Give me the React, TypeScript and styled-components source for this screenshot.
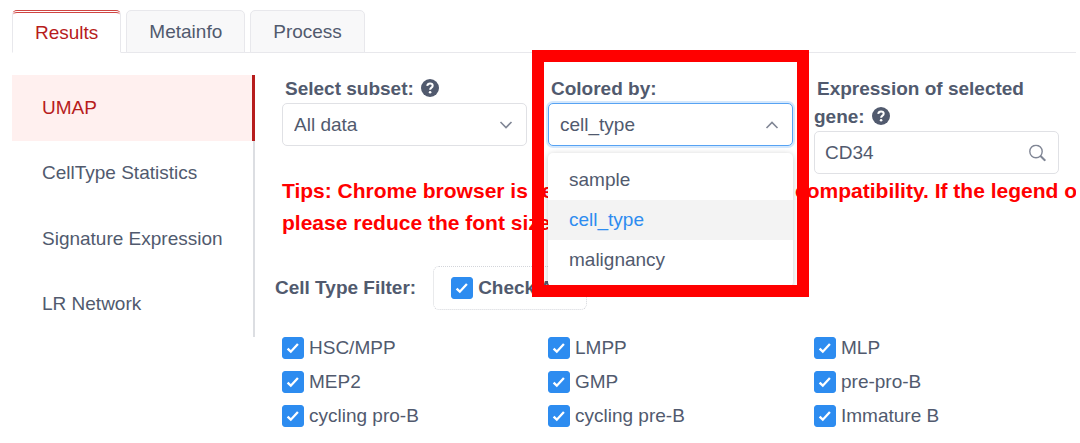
import React, { useState } from "react";
import styled, { createGlobalStyle } from "styled-components";

const text = "#515a6e";
const line = "#e8e8ec";
const red = "#b71c1c";
const blue = "#2d8cf0";

const GlobalStyle = createGlobalStyle`
  *, *::before, *::after { box-sizing: border-box; }
  body {
    margin: 0;
    background: #fff;
    color: ${text};
    font-family: "Liberation Sans", Arial, sans-serif;
    font-size: 19px;
    line-height: 28px;
  }
  button, input, select { font: inherit; color: inherit; }
`;

const Page = styled.div`
  padding: 10px 4px 0 12px;
`;

const TabBar = styled.div`
  display: flex;
  gap: 5px;
  border-bottom: 1px solid ${line};
`;

const Tab = styled.button<{ $active: boolean }>`
  height: 43px;
  margin-bottom: -1px;
  padding: 0 22px;
  border: 1px solid ${line};
  border-top: ${(p) => (p.$active ? "3px double #cf4542" : `1px solid ${line}`)};
  border-bottom-color: ${(p) => (p.$active ? "#fff" : line)};
  border-radius: 5px 5px 0 0;
  background: ${(p) => (p.$active ? "#fff" : "#f8f8f9")};
  color: ${(p) => (p.$active ? red : text)};
  cursor: pointer;
`;

const Body = styled.div`
  display: flex;
  align-items: flex-start;
  padding-top: 22px;
`;

const SideNav = styled.nav`
  display: grid;
  grid-auto-rows: 1fr;
  flex: 0 0 243px;
  min-height: 262px;
  box-shadow: inset -2px 0 #dcdee2;
`;

const SideLink = styled.a<{ $active: boolean }>`
  display: flex;
  align-items: center;
  padding-left: 30px;
  border-right: 3px solid ${(p) => (p.$active ? red : "transparent")};
  background: ${(p) => (p.$active ? "#fff0ef" : "transparent")};
  color: ${(p) => (p.$active ? red : text)};
  text-decoration: none;
`;

// Long tips are cut at the right edge; the top stays open for the highlight frame.
const Content = styled.main`
  flex: 1;
  min-width: 0;
  padding-left: 27px;
  overflow-x: clip;
  overflow-y: visible;
`;

const Columns = styled.div`
  display: grid;
  grid-template-columns: repeat(3, 1fr);
  column-gap: 21px;
  padding-right: 17px;
`;

const Field = styled.div`
  position: relative;
`;

const FieldLabel = styled.label`
  display: block;
  font-weight: bold;
  text-indent: 3px;

  svg {
    margin-left: 2px;
    vertical-align: -2px;
  }
`;

const Control = styled.div`
  position: relative;

  > svg {
    position: absolute;
    right: 13px;
    top: 50%;
    transform: translateY(-50%);
    pointer-events: none;
  }
`;

const Select = styled.select<{ $open?: boolean }>`
  display: block;
  appearance: none;
  width: 100%;
  height: 43px;
  padding: 0 11px;
  border: 1px solid ${(p) => (p.$open ? "#57a3f3" : "#e0e1e5")};
  border-radius: 5px;
  background: #fff;
  box-shadow: ${(p) => (p.$open ? "0 0 0 2px rgba(45, 140, 240, 0.2)" : "none")};
  outline: none;
`;

const TextInput = styled.input`
  display: block;
  width: 100%;
  height: 43px;
  padding: 0 40px 0 10px;
  border: 1px solid #e0e1e5;
  border-radius: 5px;
  background: #fff;
  outline: none;
`;

const Menu = styled.ul`
  position: absolute;
  z-index: 1;
  top: 50px;
  left: 0;
  right: 0;
  margin: 0;
  padding: 7px 0;
  border-radius: 5px;
  background: #fff;
  box-shadow: 0 1px 6px rgba(0, 0, 0, 0.2);
  list-style: none;
`;

const MenuItem = styled.li<{ $selected: boolean }>`
  padding: 6px 21px;
  background: ${(p) => (p.$selected ? "#f3f3f3" : "#fff")};
  color: ${(p) => (p.$selected ? blue : text)};
  cursor: pointer;
`;

const Highlight = styled.div`
  position: absolute;
  z-index: 2;
  top: -25px;
  left: -16px;
  right: -16px;
  height: 247px;
  border: 12px solid #f00;
  pointer-events: none;
`;

const Tips = styled.p`
  margin: 1px 0 0;
  color: #f00;
  font-size: 21px;
  font-weight: bold;
  line-height: 32px;
  white-space: nowrap;
`;

const FilterRow = styled.div`
  display: flex;
  align-items: center;
  gap: 17px;
  margin: 27px 0 24px -7px;
  font-weight: bold;
`;

const CheckAllBox = styled.div`
  padding: 7px 22px 7px 17px;
  border: 1px dotted #d3d5da;
  border-radius: 6px;
`;

const CheckLabel = styled.label`
  display: flex;
  align-items: center;
  gap: 5px;
`;

const CheckGrid = styled(Columns)`
  row-gap: 6px;
`;

const Tick = styled.span`
  display: grid;
  flex: none;
  width: 22px;
  height: 22px;

  > * { grid-area: 1 / 1; }
  svg { pointer-events: none; }
`;

const TickInput = styled.input`
  appearance: none;
  width: 22px;
  height: 22px;
  margin: 0;
  border: 1px solid #dcdee2;
  border-radius: 3px;
  background: #fff;

  &:checked {
    border-color: ${blue};
    background: ${blue};
  }
`;

function HelpIcon() {
  return (
    <svg width="18" height="18" viewBox="0 0 18 18" aria-hidden="true">
      <circle cx="9" cy="9" r="9" fill={text} />
      <path
        d="M6.200 6.900C6.500 5.300 7.500 4.500 9 4.500c1.700 0 2.700 1 2.700 2.200 0 1.900-2.600 1.900-2.600 4"
        fill="none"
        stroke="#fff"
        strokeWidth="2"
      />
      <circle cx="9.100" cy="13.200" r="1.300" fill="#fff" />
    </svg>
  );
}

function Chevron({ up = false }: { up?: boolean }) {
  return (
    <svg width="16" height="16" viewBox="0 0 16 16" fill="none" stroke="#808695" strokeWidth="1.600" aria-hidden="true">
      <path d={up ? "M2.500 11 8 5.500 13.500 11" : "M2.500 5 8 10.500l5.500-5.500"} />
    </svg>
  );
}

function SearchIcon() {
  return (
    <svg width="17" height="17" viewBox="0 0 17 17" fill="none" stroke="#808695" strokeWidth="1.400" aria-hidden="true">
      <circle cx="7" cy="7" r="6.200" />
      <path d="m11.300 11.300 5 5" strokeWidth="2" />
    </svg>
  );
}

function Check({ label }: { label: string }) {
  return (
    <CheckLabel>
      <Tick>
        <TickInput type="checkbox" defaultChecked />
        <svg viewBox="0 0 22 22" fill="none" stroke="#fff" strokeWidth="2.300" aria-hidden="true">
          <path d="m5.600 11.600 3.200 3.100 7.100-7.800" />
        </svg>
      </Tick>
      {label}
    </CheckLabel>
  );
}

const tabs = ["Results", "Metainfo", "Process"];
const sections = ["UMAP", "CellType Statistics", "Signature Expression", "LR Network"];
const colorings = ["sample", "cell_type", "malignancy"];
const cellTypes = [
  "HSC/MPP", "LMPP", "MLP",
  "MEP2", "GMP", "pre-pro-B",
  "cycling pro-B", "cycling pre-B", "Immature B",
];

export default function App() {
  const [tab, setTab] = useState("Results");
  const [section, setSection] = useState("UMAP");
  const [coloring, setColoring] = useState("cell_type");

  return (
    <Page>
      <GlobalStyle />
      <TabBar role="tablist">
        {tabs.map((t) => (
          <Tab key={t} role="tab" aria-selected={t === tab} $active={t === tab} onClick={() => setTab(t)}>
            {t}
          </Tab>
        ))}
      </TabBar>
      <Body>
        <SideNav>
          {sections.map((s) => (
            <SideLink key={s} href="#" $active={s === section} onClick={() => setSection(s)}>
              {s}
            </SideLink>
          ))}
        </SideNav>
        <Content>
          <Columns>
            <Field>
              <FieldLabel htmlFor="subset">
                Select subset: <HelpIcon />
              </FieldLabel>
              <Control>
                <Select id="subset">
                  <option>All data</option>
                </Select>
                <Chevron />
              </Control>
            </Field>
            <Field>
              <FieldLabel htmlFor="coloring">Colored by:</FieldLabel>
              <Control>
                <Select id="coloring" $open value={coloring} onChange={(e) => setColoring(e.target.value)}>
                  {colorings.map((c) => (
                    <option key={c}>{c}</option>
                  ))}
                </Select>
                <Chevron up />
                <Menu role="listbox" aria-label="Colored by">
                  {colorings.map((c) => (
                    <MenuItem
                      key={c}
                      role="option"
                      aria-selected={c === coloring}
                      $selected={c === coloring}
                      onClick={() => setColoring(c)}
                    >
                      {c}
                    </MenuItem>
                  ))}
                </Menu>
              </Control>
              <Highlight />
            </Field>
            <Field>
              <FieldLabel htmlFor="gene">
                Expression of selected gene: <HelpIcon />
              </FieldLabel>
              <Control>
                <TextInput id="gene" type="text" defaultValue="CD34" />
                <SearchIcon />
              </Control>
            </Field>
          </Columns>
          <Tips>
            Tips: Chrome browser is recommended with better compatibility. If the legend o
            <br />
            please reduce the font size
          </Tips>
          <FilterRow>
            Cell Type Filter:
            <CheckAllBox>
              <Check label="Check All" />
            </CheckAllBox>
          </FilterRow>
          <CheckGrid>
            {cellTypes.map((c) => (
              <Check key={c} label={c} />
            ))}
          </CheckGrid>
        </Content>
      </Body>
    </Page>
  );
}
